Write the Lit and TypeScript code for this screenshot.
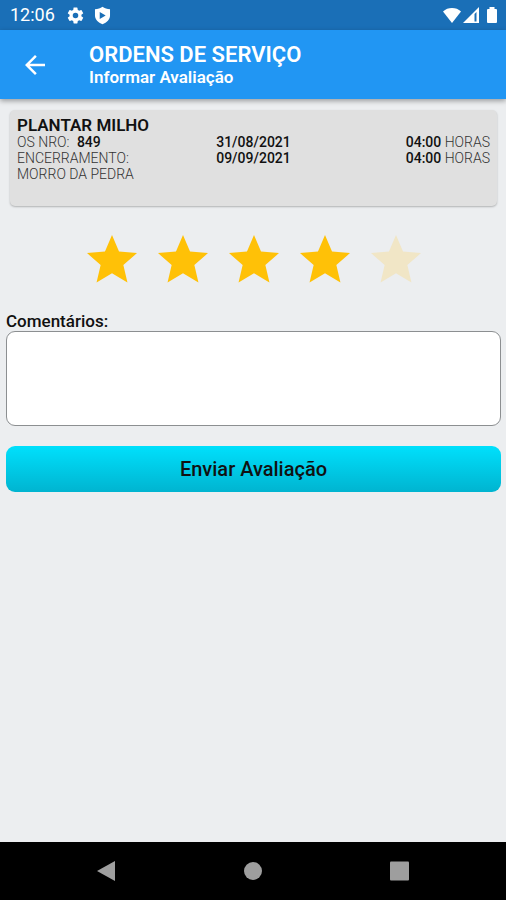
import { LitElement, html, css } from "lit";
import { customElement, property, state } from "lit/decorators.js";
import { classMap } from "lit/directives/class-map.js";

@customElement("status-bar")
export class StatusBar extends LitElement {
  static styles = css`
    :host {
      display: flex;
      align-items: center;
      height: 30px;
      padding: 0 4px 0 10px;
      background: #1a6fb7;
      color: #fff;
      font-size: 18px;
      line-height: 30px;
    }
    .icons {
      display: flex;
      align-items: center;
      gap: 8px;
      margin-left: 11px;
      flex: 1;
    }
    .signals {
      display: flex;
      align-items: center;
    }
    svg {
      display: block;
      fill: currentColor;
    }
  `;

  render() {
    return html`
      <span>12:06</span>
      <span class="icons">
        <svg width="19" height="19" viewBox="0 0 24 24" aria-hidden="true">
          <path
            d="M19.43 12.98c.04-.32.07-.64.07-.98s-.03-.66-.07-.98l2.11-1.65c.19-.15.24-.42.12-.64l-2-3.46c-.12-.22-.39-.3-.61-.22l-2.49 1c-.52-.4-1.08-.73-1.69-.98l-.38-2.65A.49.49 0 0 0 14 2h-4c-.25 0-.46.18-.49.42l-.38 2.65c-.61.25-1.17.59-1.69.98l-2.49-1c-.23-.09-.49 0-.61.22l-2 3.46c-.13.22-.07.49.12.64l2.11 1.65c-.04.32-.07.65-.07.98s.03.66.07.98l-2.11 1.65c-.19.15-.24.42-.12.64l2 3.46c.12.22.39.3.61.22l2.49-1c.52.4 1.08.73 1.69.98l.38 2.65c.03.24.24.42.49.42h4c.25 0 .46-.18.49-.42l.38-2.65c.61-.25 1.17-.59 1.69-.98l2.49 1c.23.09.49 0 .61-.22l2-3.46c.12-.22.07-.49-.12-.64l-2.11-1.65zM12 15.5a3.5 3.5 0 1 1 0-7 3.5 3.5 0 0 1 0 7z"
          />
        </svg>
        <svg width="19" height="19" viewBox="0 0 24 24" aria-hidden="true">
          <path
            fill-rule="evenodd"
            d="M12 1C9.500 3 6 4 2.500 4v8c0 5 4 9 9.500 11 5.500-2 9.500-6 9.500-11V4C18 4 14.500 3 12 1zM8.500 7.500v9l7.500-4.500z"
          />
        </svg>
      </span>
      <span class="signals">
        <svg width="20" height="20" viewBox="0 0 20 20" aria-hidden="true">
          <path d="M10 18L1 6.500C3.500 4 6.500 3 10 3s6.500 1 9 3.500z" />
        </svg>
        <svg width="18" height="20" viewBox="0 0 18 20" aria-hidden="true">
          <path fill-rule="evenodd" d="M1 18L17 2v16zM12.500 9v7.500h2V7z" />
        </svg>
        <svg width="22" height="20" viewBox="0 0 22 20" aria-hidden="true">
          <path
            d="M9.500 2h5v2H16q1 0 1 1v12q0 1-1 1H8q-1 0-1-1V5q0-1 1-1h1.500z"
          />
        </svg>
      </span>
    `;
  }
}

@customElement("star-rating")
export class StarRating extends LitElement {
  @property({ type: Number }) value = 0;

  static styles = css`
    fieldset {
      display: flex;
      justify-content: center;
      gap: 11px;
      margin: 0;
      padding: 0;
      border: 0;
    }
    .star {
      display: grid;
      cursor: pointer;
      color: #f1e6c6;
    }
    .on {
      color: #ffc107;
    }
    input,
    svg {
      grid-area: 1 / 1;
      width: 60px;
      height: 60px;
      margin: 0;
    }
    input {
      appearance: none;
      border-radius: 8px;
      cursor: pointer;
    }
    svg {
      fill: currentColor;
      pointer-events: none;
    }
  `;

  render() {
    return html`
      <fieldset aria-label="Avaliação">
        ${[1, 2, 3, 4, 5].map(
          (n) => html`
            <label class=${classMap({ star: true, on: n <= this.value })}>
              <input
                type="radio"
                name="rating"
                aria-label=${n}
                .value=${String(n)}
                .checked=${n === this.value}
                @change=${() => (this.value = n)}
              />
              <svg viewBox="0 0 24 24" aria-hidden="true">
                <path
                  d="M12 17.270L18.180 21l-1.640-7.030L22 9.240l-7.190-.610L12 2 9.190 8.630 2 9.240l5.460 4.730L5.820 21z"
                />
              </svg>
            </label>
          `
        )}
      </fieldset>
    `;
  }
}

@customElement("app-root")
export class AppRoot extends LitElement {
  @state() private order = {
    title: "PLANTAR MILHO",
    number: "849",
    place: "MORRO DA PEDRA",
    opened: { date: "31/08/2021", hours: "04:00" },
    closed: { date: "09/09/2021", hours: "04:00" },
  };

  static styles = css`
    :host {
      display: flex;
      flex-direction: column;
      min-height: 100vh;
      background: #eceef0;
      color: #111;
      font-family: Roboto, sans-serif;
    }
    header {
      display: flex;
      align-items: center;
      gap: 39px;
      padding: 12px 20px;
      background: #2196f3;
      color: #fff;
      box-shadow: 0 2px 5px rgba(0, 0, 0, 0.35);
    }
    button {
      border: 0;
      padding: 0;
      font-family: inherit;
      color: inherit;
      cursor: pointer;
    }
    svg {
      display: block;
      fill: currentColor;
    }
    .back {
      background: none;
    }
    h1,
    h2,
    p {
      margin: 0;
      font-weight: 500;
    }
    h1 {
      font-size: 22px;
      line-height: 25px;
      font-weight: 600;
    }
    header p {
      font-size: 17px;
      line-height: 20px;
      font-weight: 600;
    }
    main {
      flex: 1;
      padding: 11px 5px 20px 6px;
    }
    .card {
      margin: 0 4px;
      padding: 7px 7px 24px;
      border-radius: 5px;
      background: #e0e0e0;
      box-shadow: 0 1px 2px rgba(0, 0, 0, 0.25);
    }
    h2 {
      font-size: 17px;
      line-height: 17px;
      font-weight: 600;
    }
    .details {
      display: grid;
      grid-template-columns: 1fr auto 1fr;
      grid-auto-rows: 16px;
      color: #333;
      font-size: 14px;
      line-height: 16px;
      font-weight: 300;
    }
    .details b {
      color: #111;
      font-size: 14px;
      font-weight: 500;
    }
    .number {
      margin-left: 4px;
    }
    .hours {
      text-align: right;
    }
    star-rating {
      display: block;
      margin: 24px 0 21px;
    }
    .caption {
      display: block;
      font-size: 17px;
      line-height: 20px;
      font-weight: 500;
    }
    textarea {
      display: block;
      box-sizing: border-box;
      width: 100%;
      height: 95px;
      padding: 8px;
      border: 1px solid #8c8f91;
      border-radius: 9px;
      background: #fff;
      font: inherit;
      resize: none;
    }
    .send {
      width: 100%;
      height: 46px;
      margin-top: 20px;
      border-radius: 9px;
      background: linear-gradient(#00e0fc, #00b4d0);
      font-size: 20px;
      font-weight: 500;
    }
    nav {
      display: grid;
      grid-template-columns: repeat(3, 29%);
      justify-content: center;
      height: 58px;
      background: #000;
      color: #9e9e9e;
    }
    nav button {
      display: grid;
      place-items: center;
      background: none;
    }
  `;

  render() {
    const o = this.order;
    return html`
      <status-bar></status-bar>
      <header>
        <button class="back" aria-label="Voltar">
          <svg width="30" height="30" viewBox="0 0 24 24">
            <path
              d="M20 11H7.830l5.590-5.590L12 4l-8 8 8 8 1.410-1.410L7.830 13H20z"
            />
          </svg>
        </button>
        <div>
          <h1>ORDENS DE SERVIÇO</h1>
          <p>Informar Avaliação</p>
        </div>
      </header>
      <main>
        <section class="card">
          <h2>${o.title}</h2>
          <div class="details">
            <span>OS NRO: <b class="number">${o.number}</b></span>
            <b>${o.opened.date}</b>
            <span class="hours"><b>${o.opened.hours}</b> HORAS</span>
            <span>ENCERRAMENTO:</span>
            <b>${o.closed.date}</b>
            <span class="hours"><b>${o.closed.hours}</b> HORAS</span>
            <span>${o.place}</span>
          </div>
        </section>
        <star-rating .value=${4}></star-rating>
        <label class="caption" for="comments">Comentários:</label>
        <textarea id="comments"></textarea>
        <button class="send">Enviar Avaliação</button>
      </main>
      <nav>
        <button aria-label="Voltar">
          <svg width="22" height="22" viewBox="0 0 22 22">
            <path d="M2 11L20 1v20z" />
          </svg>
        </button>
        <button aria-label="Início">
          <svg width="22" height="22" viewBox="0 0 22 22">
            <circle cx="11" cy="11" r="9" />
          </svg>
        </button>
        <button aria-label="Recentes">
          <svg width="22" height="22" viewBox="0 0 22 22">
            <rect x="1" y="1.500" width="19" height="19" rx="1" />
          </svg>
        </button>
      </nav>
    `;
  }
}
